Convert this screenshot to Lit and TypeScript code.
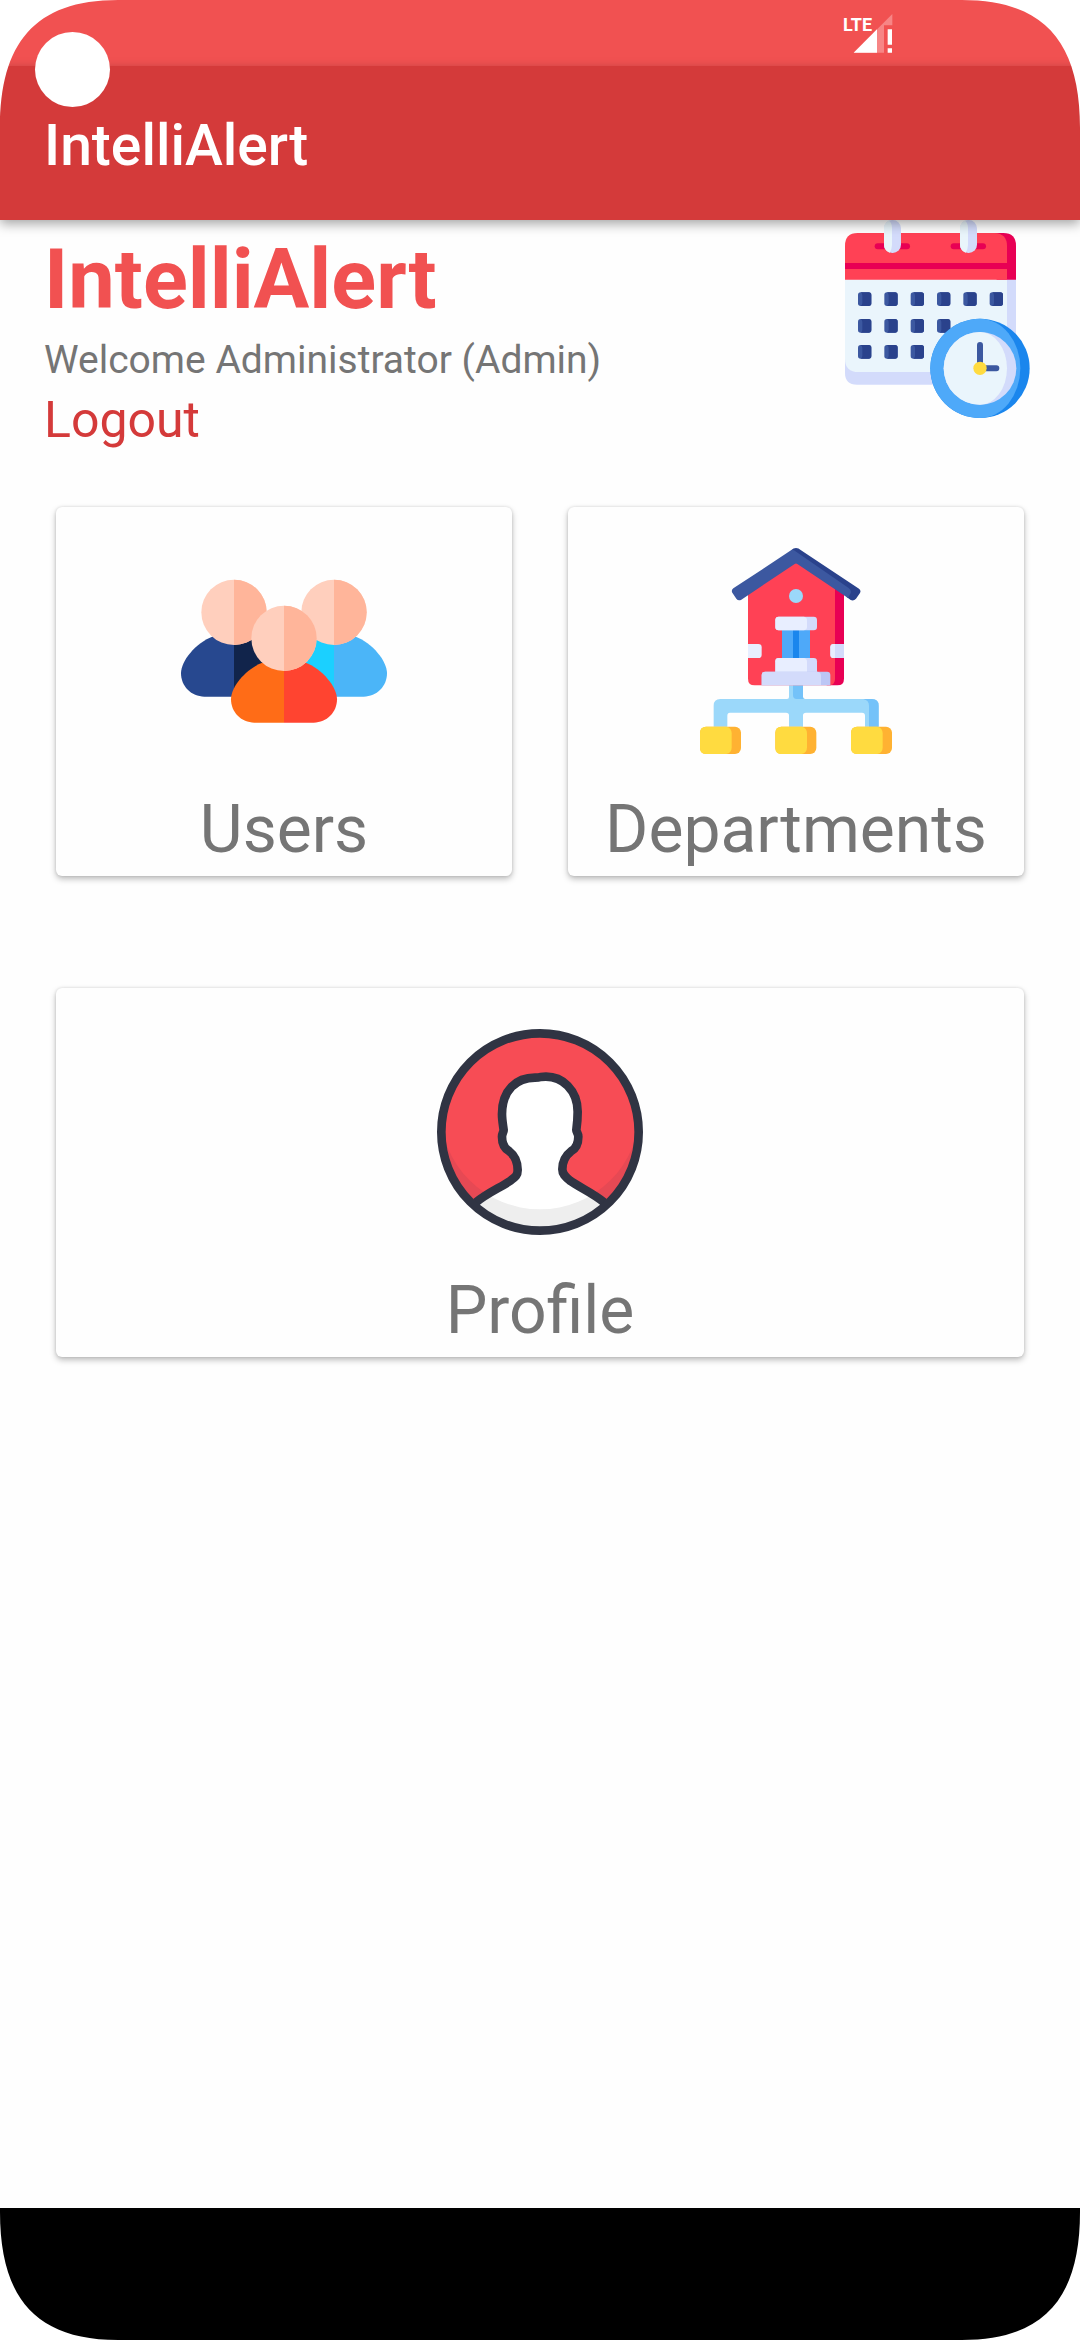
import { LitElement, html, svg, css } from "lit";
import { customElement, property } from "lit/decorators.js";

const signalIcon = html`
  <svg viewBox="189 39 150 120" width="50" height="40" role="img" aria-label="LTE, no internet">
    <path d="M337 42V76H312V158H221Z" fill="#f78585" />
    <path d="M221 158H291V88Z" fill="#fff" />
    <path d="M323 88h13v46h-13zM323 145h13v13h-13z" fill="#fff" />
    <text x="189" y="93" font-family="Liberation Sans Narrow, Roboto, sans-serif" font-weight="700" font-size="54" fill="#fff">LTE</text>
  </svg>
`;

const dayCells = [
  [247, 6],
  [327, 4],
  [405, 3],
].flatMap(([y, count]) => Array.from({ length: count }, (_, i) => ({ x: 84 + i * 79, y })));

const calendarIcon = html`
  <svg class="calendar" viewBox="42 30 561 594" width="187" height="198" aria-hidden="true">
    <path d="M45 200H558V488Q558 524 522 524H81Q45 524 45 488Z" fill="#d3dbfb" />
    <path d="M45 200H531V486H86Q45 486 45 446Z" fill="#eaf5fc" />
    <path d="M480 69H520Q558 69 558 107V209H500Z" fill="#e80054" />
    <path d="M45 209V107Q45 69 83 69H494Q531 71 531 108V209Z" fill="#ff4155" />
    <path d="M45 159H531V177H45Z" fill="#e80054" />
    ${[162, 390].map(
      (x) => svg`
        <rect x=${x - 28} y="100" width="106" height="18" rx="9" fill="#e80054" />
        <rect x=${x} y="30" width="51" height="99" rx="25" fill="#d3dbfb" />
        <path d=${`M${x + 20} 30A25 25 0 0 0 ${x} 56V103A25 25 0 0 0 ${x + 17} 128Q${x + 24} 118 ${x + 24} 104V55Q${x + 24} 40 ${x + 16} 33Z`} fill="#e9f5fb" />
      `
    )}
    ${dayCells.map(
      ({ x, y }) => svg`
        <rect x=${x} y=${y} width="40" height="41" rx="8" fill="#3c58a0" />
        <path d=${`M${x + 8} ${y}H${x + 32}Q${x + 40} ${y} ${x + 40} ${y + 8}V${y + 33}Q${x + 40} ${y + 41} ${x + 32} ${y + 41}H${x + 8}Q${x + 13} ${y + 38} ${x + 13} ${y + 32}V${y + 9}Q${x + 13} ${y + 3} ${x + 8} ${y}Z`} fill="#2a428c" />
      `
    )}
    <circle cx="450" cy="475" r="149" fill="#1a86ed" />
    <path d="M450 326A149 149 0 0 0 450 624A121 149 0 0 0 450 326Z" fill="#4ea9f9" />
    <circle cx="450" cy="475" r="109" fill="#d3dbfb" />
    <path d="M450 366A109 109 0 0 0 450 584A81 109 0 0 0 450 366Z" fill="#eaf5fc" />
    <path d="M450 405V475H499" fill="none" stroke="#3c58a0" stroke-width="18" stroke-linecap="round" />
    <circle cx="450" cy="475" r="20" fill="#ffdb40" />
  </svg>
`;

const person = (x: number, y: number, left: string, right: string) => svg`
  <path d=${`M${x} ${y + 253}h-89c-39 0-70-31-70-70c0-36 42-90 97-111h62z`} fill=${left} />
  <path d=${`M${x} ${y + 253}h89c39 0 70-31 70-70c0-36-42-90-97-111h-62z`} fill=${right} />
  <circle cx=${x} cy=${y} r="98" fill="#ffcfbd" />
  <path d=${`M${x} ${y - 98}a98 98 0 0 1 0 196z`} fill="#ffb59a" />
`;

const usersIcon = html`
  <svg viewBox="63 -36 618 618" width="206" height="206" aria-hidden="true">
    ${person(222, 157, "#27488f", "#11244b")}
    <path d="M522 410H380V229H460L522 229Z" fill="#1bd0ff" />
    ${person(522, 157, "#1bd0ff", "#4bb5f8")}
    ${person(372, 235, "#ff6c17", "#ff4430")}
  </svg>
`;

const departmentsIcon = html`
  <svg viewBox="39 54 618 618" width="206" height="206" aria-hidden="true">
    <path d="M327 466H369V501Q369 507 375 507H576Q596 507 596 527V590H555V557Q555 548 546 548H378Q369 548 369 556V590H327V556Q327 548 318 548H150Q142 548 142 557V590H101V527Q101 507 121 507H321Q327 507 327 501Z" fill="#9bd8fa" />
    <path d="M339 466H369V501Q369 507 375 507H350Q339 507 339 496Z" fill="#74c2f9" />
    <path d="M550 507H576Q596 507 596 527V590H567V527Q567 511 550 507Z" fill="#74c2f9" />
    ${[60, 286, 513].map(
      (x) => svg`
        <rect x=${x} y="590" width="123" height="82" rx="18" fill="#ffb232" />
        <path d=${`M${x + 18} 590H${x + 79}Q${x + 95} 593 ${x + 95} 610V652Q${x + 95} 669 ${x + 79} 672H${x + 18}Q${x} 672 ${x} 654V608Q${x} 590 ${x + 18} 590Z`} fill="#ffdb40" />
      `
    )}
    <path d="M440 150H492V446Q492 466 472 466H440Z" fill="#e80054" />
    <path d="M204 160L348 70L465 150V446Q465 462 452 466H224Q204 466 204 446Z" fill="#ff4155" />
    <path d="M333 61Q348 47 363 61L537 176Q544 182 540 189L528 206Q521 214 512 210L500 201V182Z" fill="#2a428c" />
    <path d="M333 61Q337 57 342 61L506 174Q516 182 511 191L504 204L352 102Q348 99 344 102L184 209Q175 214 169 206L158 190Q152 181 160 175Z" fill="#3c58a0" />
    <circle cx="348" cy="198" r="21" fill="#9bd8fa" />
    <path d="M306 296H390V390H306Z" fill="#4ea9f9" />
    <path d="M339 296H357V390H339Z" fill="#1a86ed" />
    <rect x="286" y="260" width="125" height="41" rx="10" fill="#d3dbfb" />
    <path d="M296 260H372Q381 262 381 271V291Q381 299 372 301H296Q286 301 286 291V270Q286 260 296 260Z" fill="#e8eeff" />
    <path d="M286 430V394Q286 384 296 384H401Q411 384 411 394V430Z" fill="#d3dbfb" />
    <path d="M286 430V394Q286 384 296 384H372Q381 386 381 395V430Z" fill="#e8eeff" />
    <path d="M245 466V435Q245 425 255 425H441Q451 425 451 435V466Z" fill="#bcc6f5" />
    <path d="M245 466V435Q245 425 255 425H413Q423 427 423 437V466Z" fill="#d3dbfb" />
    <path d="M204 342H235Q245 342 245 352V374Q245 384 235 384H204Z" fill="#e8eeff" />
    <path d="M492 342H461Q451 342 451 352V374Q451 384 461 384H492Z" fill="#d3dbfb" />
    <path d="M465 342H461Q451 342 451 352V374Q451 384 461 384H465Z" fill="#e8eeff" />
  </svg>
`;

const bust =
  "M168 577C200 550 240 533 270 513C288 500 293 495 293 480C293 455 285 437 268 424C253 415 246 398 246 380C246 370 251 366 251 360C249 345 246 330 246 312C246 240 290 203 345 203C352 203 356 203 362 201C430 192 473 245 473 305C473 325 471 345 469 360C469 366 475 370 475 380C475 398 469 415 453 424C436 437 427 458 427 478C427 492 435 500 450 512C480 533 520 550 552 577";

const profileIcon = html`
  <svg viewBox="51 57 618 618" width="206" height="206" aria-hidden="true">
    <defs>
      <clipPath id="disc"><circle cx="360" cy="366" r="296" /></clipPath>
      <clipPath id="lit"><circle cx="360" cy="298" r="300" /></clipPath>
    </defs>
    <g clip-path="url(#disc)">
      <path d="M51 57H669V675H51Z" fill="#e64954" />
      <circle cx="360" cy="298" r="300" fill="#f74c55" />
      <path d=${`${bust}V675H168Z`} fill="#eee" />
      <path d=${`${bust}V675H168Z`} fill="#fff" clip-path="url(#lit)" />
      <path d=${bust} fill="none" stroke="#303443" stroke-width="26" />
    </g>
    <circle cx="360" cy="366" r="296" fill="none" stroke="#303443" stroke-width="26" />
  </svg>
`;

@customElement("menu-card")
class MenuCard extends LitElement {
  @property() label = "";

  static styles = css`
    :host {
      display: block;
    }
    .card {
      display: flex;
      flex-direction: column;
      align-items: center;
      width: 100%;
      padding: 41px 0 0;
      border: 0;
      border-radius: 6px;
      background: #fefefe;
      box-shadow: 0 3px 6px rgba(0, 0, 0, 0.26), 0 0 3px rgba(0, 0, 0, 0.12);
      color: #757575;
      font: 400 66px/92px Roboto, sans-serif;
      cursor: pointer;
    }
    .label {
      margin-top: 30px;
    }
    ::slotted(svg) {
      display: block;
    }
  `;

  render() {
    return html`
      <button class="card" type="button">
        <slot></slot>
        <span class="label">${this.label}</span>
      </button>
    `;
  }
}

@customElement("app-root")
class AppRoot extends LitElement {
  static styles = css`
    :host {
      display: block;
      font-family: Roboto, sans-serif;
    }
    .screen {
      position: relative;
      display: flex;
      flex-direction: column;
      min-height: 100vh;
      background: #fefefe;
    }
    .status {
      display: flex;
      align-items: center;
      justify-content: flex-end;
      height: 66px;
      padding-right: 187px;
      background: #f15151;
    }
    .appbar {
      position: relative;
      z-index: 1;
      box-sizing: border-box;
      display: flex;
      align-items: center;
      height: 154px;
      padding: 5px 44px 0;
      background: #d43a3a;
      box-shadow: 0 4px 11px rgba(0, 0, 0, 0.35);
      color: #fff;
      font-size: 57px;
      font-weight: 500;
    }
    .main {
      flex: 1;
    }
    .intro {
      display: flex;
      justify-content: space-between;
      align-items: flex-start;
      padding: 0 49px 0 44px;
    }
    .greeting {
      display: flex;
      flex-direction: column;
      align-items: flex-start;
      padding-top: 6px;
    }
    .calendar {
      flex: none;
    }
    .name {
      margin: 0;
      color: #f15151;
      font-size: 83px;
      font-weight: 700;
      line-height: 108px;
    }
    .welcome {
      margin: 0;
      color: #757575;
      font-size: 39px;
      line-height: 52px;
    }
    .logout {
      padding: 0;
      border: 0;
      background: none;
      color: #d43a3a;
      font: 400 50px/68px Roboto, sans-serif;
      cursor: pointer;
    }
    .cards {
      display: grid;
      grid-template-columns: 1fr 1fr;
      gap: 112px 56px;
      padding: 53px 56px;
    }
    .wide {
      grid-column: 1 / -1;
    }
    .navbar {
      height: 132px;
      background: #000;
    }
    .camera {
      position: absolute;
      z-index: 2;
      top: 32px;
      left: 35px;
      width: 75px;
      height: 75px;
      border-radius: 50%;
      background: #fff;
    }
    .corner {
      position: absolute;
      z-index: 2;
      width: 118px;
      height: 128px;
      fill: #fff;
    }
    .tl {
      top: 0;
      left: 0;
    }
    .tr {
      top: 0;
      right: 0;
      transform: scaleX(-1);
    }
    .bl {
      bottom: 0;
      left: 0;
      transform: scaleY(-1);
    }
    .br {
      bottom: 0;
      right: 0;
      transform: scale(-1, -1);
    }
  `;

  render() {
    return html`
      <div class="screen">
        <div class="status">${signalIcon}</div>
        <header class="appbar">IntelliAlert</header>
        <main class="main">
          <section class="intro">
            <div class="greeting">
              <h1 class="name">IntelliAlert</h1>
              <p class="welcome">Welcome Administrator (Admin)</p>
              <button class="logout" type="button">Logout</button>
            </div>
            ${calendarIcon}
          </section>
          <nav class="cards">
            <menu-card label="Users">${usersIcon}</menu-card>
            <menu-card label="Departments">${departmentsIcon}</menu-card>
            <menu-card class="wide" label="Profile">${profileIcon}</menu-card>
          </nav>
        </main>
        <div class="navbar"></div>
        <div class="camera"></div>
        ${["tl", "tr", "bl", "br"].map(
          (place) => html`
            <svg class="corner ${place}" viewBox="0 0 118 128" aria-hidden="true">
              <path d="M0 0V128C0 44 34 0 118 0Z" />
            </svg>
          `
        )}
      </div>
    `;
  }
}
